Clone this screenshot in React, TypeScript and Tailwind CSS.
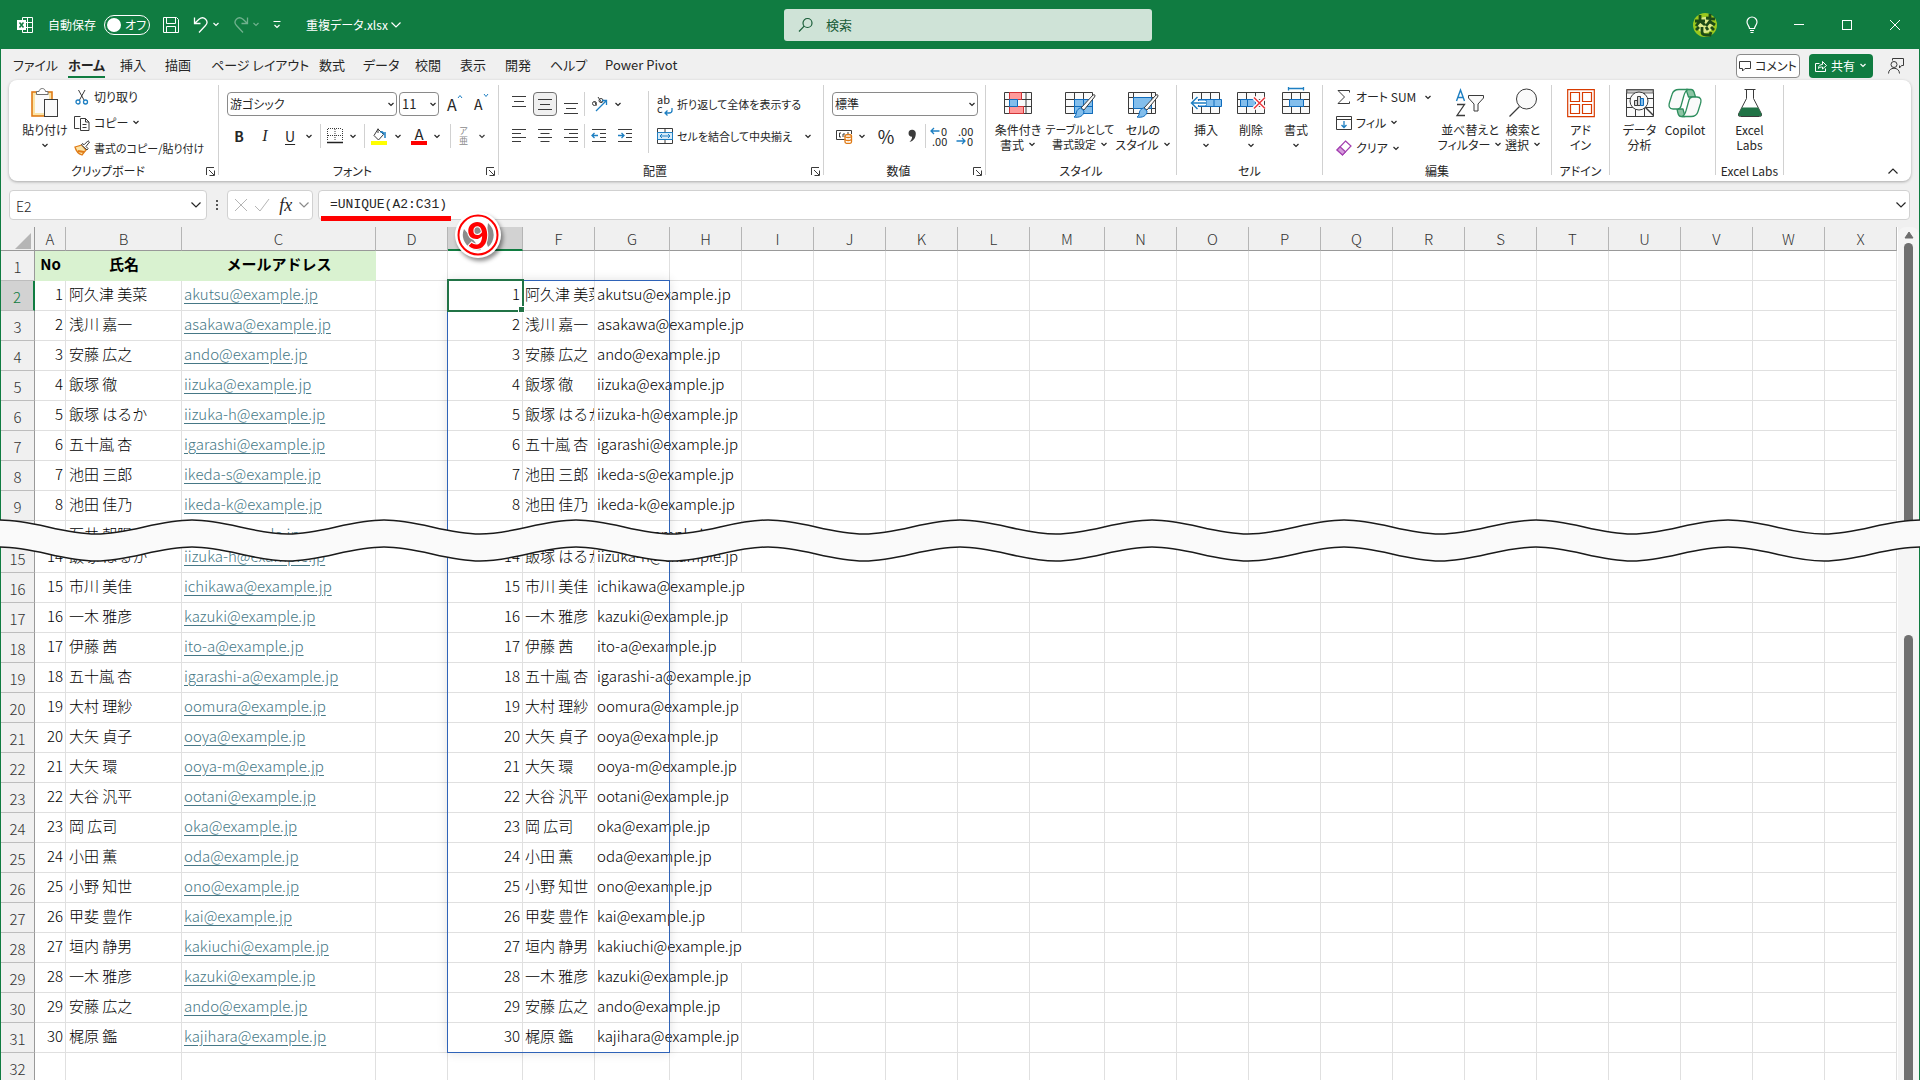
import type { ReactNode } from "react"

type SvgProps = { w?: number; h?: number; children: ReactNode; className?: string }

const Svg = ({ w = 16, h = 16, children, className = "" }: SvgProps) => (
  <svg width={w} height={h} viewBox={`0 0 ${w} ${h}`} fill="none" stroke="#3b3b3b" className={`shrink-0 ${className}`} aria-hidden="true">
    {children}
  </svg>
)

const Chevron = ({ className = "" }: { className?: string }) => (
  <svg width="8" height="5" viewBox="0 0 8 5" fill="none" stroke="currentColor" strokeWidth="1.2" className={`shrink-0 ${className}`} aria-hidden="true">
    <path d="M1.5 1 4 3.5 6.5 1" />
  </svg>
)

const WideChevron = ({ className = "" }: { className?: string }) => (
  <svg width="12" height="8" viewBox="0 0 12 8" fill="none" stroke="currentColor" strokeWidth="1.2" className={`shrink-0 ${className}`} aria-hidden="true">
    <path d="M1.5 1.5 6 6 10.5 1.5" />
  </svg>
)

/* ---------- title bar ---------- */

const TitleBar = () => (
  <header className="grid h-[49px] shrink-0 grid-cols-[1fr_368px_1fr] items-center bg-[#107c41] pl-4 text-white">
    <div className="flex items-center text-xs whitespace-nowrap">
      <Svg w={18} h={18}>
        <g stroke="#fff">
          <path d="M6.500 4.500v-3h10v15h-10v-3M11.500 1.500v15M6.500 6.500h10M6.500 11.500h10" />
        </g>
        <rect x="1" y="4" width="9" height="10" fill="#fff" stroke="none" />
        <path d="m3.500 6.500 4 5M7.500 6.500l-4 5" stroke="#107c41" strokeWidth="1.500" />
      </Svg>
      <span className="ml-3.5">自動保存</span>
      <button role="switch" aria-checked="false" aria-label="自動保存" className="ml-2 flex h-5 w-[46px] items-center gap-1 rounded-full border border-white pl-0.5 [font-feature-settings:'palt']">
        <span className="size-3.5 shrink-0 rounded-full bg-white" />
        オフ
      </button>
      <button aria-label="上書き保存" className="ml-3">
        <Svg w={18} h={18}>
          <path d="M1.500 1.500h13l2 2v13h-15zM4.500 1.500v6h9v-6M4.500 16.500v-6h9v6" stroke="#fff" />
        </Svg>
      </button>
      <button aria-label="元に戻す" className="ml-3 flex items-center gap-0.5">
        <Svg w={18} h={18}>
          <path d="M2.500 1.500v6h6M2.500 7.500 7 3.200c5-4 10.500 2 6.500 6.300l-6.500 7" stroke="#fff" strokeWidth="1.300" />
        </Svg>
        <Chevron />
      </button>
      <button aria-label="やり直し" className="ml-3 flex items-center gap-0.5 opacity-40">
        <Svg w={18} h={18}>
          <path d="M15.500 1.500v6h-6M15.500 7.500 11 3.200c-5-4-10.500 2-6.500 6.300l6.500 7" stroke="#fff" strokeWidth="1.300" />
        </Svg>
        <Chevron />
      </button>
      <button aria-label="クイック アクセス ツール バーのカスタマイズ" className="ml-3">
        <Svg w={10} h={10}>
          <path d="M1.500 1.500h7M2.500 5 5 7.500 7.500 5" stroke="#fff" strokeWidth="1.200" />
        </Svg>
      </button>
      <button className="ml-6 flex items-center gap-0.5 [font-feature-settings:'palt']">
        重複データ.xlsx <WideChevron />
      </button>
    </div>
    <label className="flex h-8 items-center gap-3 rounded-[3px] bg-[#cfe3d7] px-3.5 text-[#185c37]">
      <Svg w={16} h={16}>
        <g stroke="#185c37" strokeWidth="1.200">
          <circle cx="9.500" cy="6" r="4.500" />
          <path d="M6.200 9.200 1 14.500" />
        </g>
      </Svg>
      <input type="search" aria-label="検索" placeholder="検索" className="w-full bg-transparent text-[13px] outline-none placeholder:text-[#185c37]" />
    </label>
    <div className="flex items-center justify-end pr-px">
      <svg width="24" height="24" viewBox="0 0 24 24" className="mr-4" aria-hidden="true">
        <circle cx="12" cy="12" r="12" fill="#9bc81e" />
        <circle cx="12" cy="12" r="8" fill="#dce98a" />
        <g stroke="#1c4a17" strokeWidth="2.800" fill="none">
          <path d="M2 8h10M7 2v6L3 13M7 8l5 4M13 5l9 1M17 1v7l-4 5M16 8l6 4M3 17l3-3M9 14v5q0 3 4 3h4l1-3M13 14l2 3M18 14l3 3" />
        </g>
      </svg>
      <button aria-label="ヒント" className="flex w-[38px] justify-center">
        <Svg w={14} h={18}>
          <path d="M4.500 12.500C4.500 10 2 9 2 6a5 5 0 0 1 10 0c0 3-2.500 4-2.500 6.500zM5 14.500h4M5.500 16.500h3" stroke="#fff" strokeWidth="1.200" />
        </Svg>
      </button>
      <button aria-label="最小化" className="ml-1 flex w-12 justify-center py-4">
        <span className="h-px w-2.5 bg-white" />
      </button>
      <button aria-label="最大化" className="flex w-12 justify-center">
        <span className="size-2.5 border border-white" />
      </button>
      <button aria-label="閉じる" className="flex w-12 justify-center">
        <Svg w={12} h={12}>
          <path d="m1 1 10 10M11 1 1 11" stroke="#fff" />
        </Svg>
      </button>
    </div>
  </header>
)

/* ---------- tabs ---------- */

const tabs = [
  { name: "ファイル", width: "w-[55px]" },
  { name: "ホーム", width: "w-[52px]" },
  { name: "挿入", width: "w-[45px]" },
  { name: "描画", width: "w-[46px]" },
  { name: "ページ レイアウト", width: "w-[108px]" },
  { name: "数式", width: "w-11" },
  { name: "データ", width: "w-[52px]" },
  { name: "校閲", width: "w-[45px]" },
  { name: "表示", width: "w-[45px]" },
  { name: "開発", width: "w-[45px]" },
  { name: "ヘルプ", width: "w-[55px]" },
  { name: "Power Pivot", width: "w-24" },
]

const TabRow = () => (
  <nav className="flex h-[31px] shrink-0 items-center justify-between pt-0.5 pr-3.5 pl-3">
    <div className="flex text-[13px] whitespace-nowrap">
      {tabs.map(tab => (
        <div key={tab.name} className={tab.width}>
          <button className={tab.name === "ホーム" ? "border-b-2 border-[#107c41] leading-[22px] font-bold" : "border-b-2 border-transparent leading-[22px]"}>
            {tab.name}
          </button>
        </div>
      ))}
    </div>
    <div className="flex items-center text-xs whitespace-nowrap">
      <button className="flex h-6 w-16 items-center justify-center gap-1 rounded border border-[#8a8a8a] bg-white">
        <Svg w={12} h={12}>
          <path d="M.5 1.500h11v7H6L3.500 11V8.500h-3z" />
        </Svg>
        コメント
      </button>
      <button className="ml-[9px] flex h-6 w-16 items-center justify-center gap-1 rounded bg-[#107c41] text-white">
        <Svg w={12} h={12}>
          <path d="M4.500 3.500h-4v8h10v-3M3.500 8.500c0-3 2-4 4-4v-3l4 4-4 3.500v-2c-2 0-3 .3-4 1.500z" stroke="#fff" />
        </Svg>
        共有 <Chevron />
      </button>
      <button aria-label="フィードバック" className="ml-3.5">
        <Svg w={18} h={18}>
          <path d="M5.500 3.500v-2h11v7h-2l-2 2.500v-2.500" />
          <circle cx="7" cy="7.500" r="3" />
          <path d="M1.500 16.500c0-7 11-7 11 0" />
        </Svg>
      </button>
    </div>
  </nav>
)

/* ---------- ribbon ---------- */

const Launcher = () => (
  <button aria-label="詳細設定" className="mr-[3px]">
    <Svg w={9} h={9}>
      <path d="M.5 8V.5H8M3 3l5 5M8.500 3.500v5h-5" />
    </Svg>
  </button>
)

type GroupProps = { label: string; width: string; launcher?: boolean; children: ReactNode }

const Group = ({ label, width, launcher, children }: GroupProps) => (
  <section className={`flex h-[90px] shrink-0 flex-col border-r border-[#d1d1d1] ${width}`}>
    <div className="flex h-[78px] min-w-0 shrink-0">{children}</div>
    <div className="flex h-4 shrink-0 items-center">
      <span className="flex-1 text-center leading-4 whitespace-nowrap">{label}</span>
      {launcher && <Launcher />}
    </div>
  </section>
)

type BigProps = { icon: ReactNode; lines: string[]; width: string; menu?: "inline" | "below" }

const BigButton = ({ icon, lines, width, menu }: BigProps) => (
  <button className={`flex shrink-0 flex-col items-center pt-0.5 leading-[15px] whitespace-nowrap ${width}`}>
    <span className="mb-[3px] flex h-8 items-start">{icon}</span>
    {lines.map((line, i) => (
      <span key={line} className="flex items-center gap-1">
        {line}
        {menu === "inline" && i === lines.length - 1 && <Chevron />}
      </span>
    ))}
    {menu === "below" && <Chevron className="mt-1.5" />}
  </button>
)

const Divider = ({ className = "h-6" }: { className?: string }) => <span className={`w-px shrink-0 bg-[#d1d1d1] ${className}`} />

const PasteIcon = () => (
  <Svg w={28} h={32}>
    <rect x="1" y="5" width="20" height="24" fill="#fbe3a6" stroke="#e07b16" strokeWidth="1.600" />
    <rect x="4" y="8" width="14" height="18" fill="#fafafa" stroke="none" />
    <path d="M5.500 7.500v-3h2.500c.5-4 6-4 6.500 0h2.500v3z" fill="#fff" stroke="#707070" />
    <rect x="13.500" y="12.500" width="13" height="17" fill="#fafafa" stroke="#3b3b3b" />
  </Svg>
)

const ClipboardGroup = () => (
  <Group label="クリップボード" width="w-[209px]" launcher>
    <BigButton icon={<PasteIcon />} lines={["貼り付け"]} width="w-16 pl-1.5" menu="below" />
    <div className="flex flex-col">
      <button className="flex h-6 items-center gap-1">
        <Svg>
          <path d="M4.500 1 10 11M11 1 5.500 11" />
          <circle cx="4" cy="13" r="2" stroke="#1e7fc2" strokeWidth="1.300" />
          <circle cx="11.500" cy="13" r="2" stroke="#1e7fc2" strokeWidth="1.300" />
        </Svg>
        切り取り
      </button>
      <button className="flex h-[27px] items-center gap-1">
        <Svg>
          <path d="M5.500 13.500h-5V1.500h6" />
          <path d="M6.500 3.500h5l3.500 3.500v8.500H6.500zM11.500 3.500V7H15M8.500 9.500h4M8.500 12.500h4" />
        </Svg>
        コピー <Chevron />
      </button>
      <button className="flex h-6 items-center gap-1 text-[11px]">
        <Svg>
          <path d="m1 7 7-2 4 5-4 5C5 14 2 11 1 7z" fill="#fbe3a6" stroke="#e07b16" strokeWidth="1.300" />
          <path d="M4 11l6 1" stroke="#e07b16" strokeWidth="2" />
          <path d="m7.500 5 5.500 5 1-1.500-2-2L15.500 2 14 .8l-4 4L8.500 3.500z" fill="#fff" />
        </Svg>
        書式のコピー/貼り付け
      </button>
    </div>
  </Group>
)

const FontGroup = () => (
  <Group label="フォント" width="w-[280px]" launcher>
    <div className="flex flex-col gap-2 pt-[7px] pl-2">
      <div className="flex items-center gap-0.5">
        <span className="relative">
          <select aria-label="フォント" className="h-6 w-[170px] appearance-none rounded border border-[#8a8a8a] bg-white pl-0.5">
            <option>游ゴシック</option>
          </select>
          <Chevron className="pointer-events-none absolute top-2.5 right-0.5" />
        </span>
        <span className="relative">
          <select aria-label="フォント サイズ" className="h-6 w-10 appearance-none rounded border border-[#8a8a8a] bg-white pl-0.5 text-[13px]">
            <option>11</option>
          </select>
          <Chevron className="pointer-events-none absolute top-2.5 right-0.5" />
        </span>
        <button aria-label="フォント サイズの拡大" className="ml-1.5 flex w-[25px] items-start">
          <span className="text-base leading-5">A</span>
          <Svg w={6} h={5}>
            <path d="M1 4 3 1.500 5 4" stroke="#1e7fc2" />
          </Svg>
        </button>
        <button aria-label="フォント サイズの縮小" className="flex items-start">
          <span className="text-sm leading-[22px]">A</span>
          <Svg w={6} h={5}>
            <path d="M1 1 3 3.500 5 1" stroke="#1e7fc2" />
          </Svg>
        </button>
      </div>
      <div className="flex h-6 items-center">
        <button aria-label="太字" className="w-6 text-sm font-bold">B</button>
        <button aria-label="斜体" className="w-7 font-['Liberation_Serif',serif] text-base italic">I</button>
        <button aria-label="下線" className="flex w-[41px] items-center gap-2.5 pl-1.5 text-sm">
          <span className="underline underline-offset-2">U</span>
          <Chevron />
        </button>
        <Divider />
        <button aria-label="罫線" className="flex w-[43px] items-center gap-1.5 pl-1.5">
          <Svg>
            <path d="M.5 1v12M15.500 1v12M8 1v12M1 .5h14M1 7.500h14" strokeDasharray="1 1" />
            <path d="M0 14.500h16" stroke="#222" strokeWidth="1.500" />
          </Svg>
          <Chevron />
        </button>
        <Divider />
        <button aria-label="塗りつぶしの色" className="flex w-10 items-center gap-1.5 pl-1.5">
          <Svg w={17} h={18}>
            <path d="m7 2 5.500 5.500L7.500 13 3 8.500zM7 6V1.500" />
            <path d="M12.500 7.500c0-3-2-3-3-2M14 5v6" stroke="#1e7fc2" strokeWidth="1.500" />
            <path d="M0 16h16" stroke="#ffff00" strokeWidth="4" />
          </Svg>
          <Chevron />
        </button>
        <button aria-label="フォントの色" className="flex w-[45px] items-center gap-1.5 pl-1.5">
          <span className="w-4 border-b-4 border-[#ff0000] text-center text-[15px] leading-[14px]">A</span>
          <Chevron />
        </button>
        <Divider />
        <button aria-label="ふりがな" className="flex items-center gap-2.5 pl-2 text-[#8a8a8a]">
          <span className="flex flex-col text-[9px] leading-[10px]">
            <span>ア</span>
            <span>亜</span>
          </span>
          <Chevron className="text-[#3b3b3b]" />
        </button>
      </div>
    </div>
  </Group>
)

const alignRows = {
  top: "M1 1.500h14M3 6.500h10M1 11.500h14",
  left: "M1 1.500h14M1 5.500h9M1 9.500h14M1 13.500h9",
  center: "M1 1.500h14M3.500 5.500h9M1 9.500h14M3.500 13.500h9",
  right: "M1 1.500h14M6 5.500h9M1 9.500h14M6 13.500h9",
}

const AlignmentGroup = () => (
  <Group label="配置" width="w-[325px]" launcher>
    <div className="flex flex-col gap-2 pt-[7px] pl-[7px]">
      <div className="flex h-6 items-center">
        <button aria-label="上揃え" className="flex w-[26px] justify-center pb-1.5">
          <Svg h={13}><path d={alignRows.top} /></Svg>
        </button>
        <button aria-label="上下中央揃え" aria-pressed="true" className="mx-px flex h-6 w-6 items-center justify-center rounded border border-[#707070] bg-[#f0f0f0]">
          <Svg h={13}><path d={alignRows.top} /></Svg>
        </button>
        <button aria-label="下揃え" className="flex w-[26px] justify-center pt-2">
          <Svg h={13}><path d={alignRows.top} /></Svg>
        </button>
        <Divider />
        <button aria-label="方向" className="flex items-center gap-1.5 pl-1.5">
          <Svg w={17} h={16}>
            <circle cx="3.500" cy="7.500" r="2" />
            <path d="m5.500 9.500-2-4M7 1l4 6" />
            <circle cx="10" cy="4.500" r="2" />
            <path d="M5 15 15 5M11 4.500h4.500V9" stroke="#1e7fc2" strokeWidth="1.300" />
          </Svg>
          <Chevron />
        </button>
      </div>
      <div className="flex h-6 items-center">
        <button aria-label="左揃え" className="flex w-[26px] justify-center"><Svg><path d={alignRows.left} /></Svg></button>
        <button aria-label="中央揃え" className="flex w-[26px] justify-center"><Svg><path d={alignRows.center} /></Svg></button>
        <button aria-label="右揃え" className="flex w-[26px] justify-center"><Svg><path d={alignRows.right} /></Svg></button>
        <Divider />
        <button aria-label="インデントを減らす" className="flex w-[27px] justify-center">
          <Svg>
            <path d="M1 1.500h14M9 5.500h6M9 9.500h6M1 13.500h14" />
            <path d="M7 7.500H1M3.500 5 1 7.500 3.500 10" stroke="#1e7fc2" strokeWidth="1.300" />
          </Svg>
        </button>
        <button aria-label="インデントを増やす" className="flex w-[26px] justify-center">
          <Svg>
            <path d="M1 1.500h14M9 5.500h6M9 9.500h6M1 13.500h14" />
            <path d="M1 7.500h6M4.500 5 7 7.500 4.500 10" stroke="#1e7fc2" strokeWidth="1.300" />
          </Svg>
        </button>
      </div>
    </div>
    <Divider className="mt-1.5 ml-2.5 h-[62px]" />
    <div className="flex flex-col gap-2 pt-[7px] pl-2 text-[11px]">
      <button className="flex h-6 items-center gap-1 whitespace-nowrap">
        <span className="relative flex w-4 flex-col text-left leading-[9px]">
          <span>ab</span>
          <span>c</span>
          <Svg w={9} h={9} className="absolute right-0 -bottom-1">
            <path d="M8 0v2.500Q8 5 5 5H1M3.500 2.500 1 5l2.500 2.500" stroke="#1e7fc2" strokeWidth="1.300" />
          </Svg>
        </span>
        折り返して全体を表示する
      </button>
      <button className="flex h-6 items-center gap-1 whitespace-nowrap">
        <Svg>
          <path d="M.5 .5h15v15H.5zM8 .5v4M8 11.500v4" />
          <path d="M.5 4.500h15v7H.5z" fill="#d8ebf8" stroke="#1e7fc2" />
          <path d="M3 8h10M5 6 3 8l2 2M11 6l2 2-2 2" stroke="#1e7fc2" />
        </Svg>
        セルを結合して中央揃え <Chevron className="ml-2" />
      </button>
    </div>
  </Group>
)

const NumberGroup = () => (
  <Group label="数値" width="w-[162px]" launcher>
    <div className="flex flex-col gap-2 pt-[7px] pl-2">
      <span className="relative">
        <select aria-label="表示形式" className="h-6 w-[146px] appearance-none rounded border border-[#8a8a8a] bg-white pl-0.5">
          <option>標準</option>
        </select>
        <Chevron className="pointer-events-none absolute top-2.5 right-0.5" />
      </span>
      <div className="flex h-6 items-center">
        <button aria-label="通貨表示形式" className="flex w-10 items-center gap-1 pl-1">
          <Svg w={18} h={16}>
            <path d="M9 11.500H.5v-9h15V6M5 5H3.500v4H5M7 9V6h2M11 5h2" />
            <path d="M9 8v6c0 2 6.500 2 6.500 0V8" fill="#fff" stroke="#e07b16" strokeWidth="1.300" />
            <ellipse cx="12.200" cy="8" rx="3.300" ry="1.500" fill="#fff" stroke="#e07b16" strokeWidth="1.300" />
            <path d="M9 11c0 2 6.500 2 6.500 0" stroke="#e07b16" strokeWidth="1.300" />
          </Svg>
          <Chevron />
        </button>
        <button aria-label="パーセント スタイル" className="w-7 text-lg">%</button>
        <button aria-label="桁区切りスタイル" className="flex w-[25px] justify-center">
          <Svg w={9} h={14}>
            <path d="M4 .8a3.500 3.500 0 0 1 3.800 3.700C7.800 9 5.500 12 1.500 13c2-2 2.600-3.300 2.600-5.200A3.500 3.500 0 0 1 4 .8z" fill="#3b3b3b" stroke="none" />
          </Svg>
        </button>
        <Divider />
        <button aria-label="小数点以下の表示桁数を増やす" className="ml-1 flex w-[26px] flex-col items-start text-[11px] leading-[10px]">
          <span className="flex items-center gap-px">
            <Svg w={10} h={8}><path d="M9.500 4H1M4 1 1 4l3 3" stroke="#1e7fc2" strokeWidth="1.300" /></Svg>0
          </span>
          <span className="pl-0.5">.00</span>
        </button>
        <button aria-label="小数点以下の表示桁数を減らす" className="flex flex-col items-start text-[11px] leading-[10px]">
          <span className="pl-0.5">.00</span>
          <span className="flex items-center gap-px">
            <Svg w={10} h={8}><path d="M.5 4H9M6 1l3 3-3 3" stroke="#1e7fc2" strokeWidth="1.300" /></Svg>0
          </span>
        </button>
      </div>
    </div>
  </Group>
)

const Brush = () => (
  <g>
    <path d="M29 8c2-1 2.500.5 1.500 2L20 23l-3-2z" fill="#fafafa" stroke="#3b3b3b" />
    <path d="M16.500 21 20 24c0 5-5 7-10 6 2-1 2-2.500 2.500-5 .5-2 2-3.500 4-4z" fill="#83beec" stroke="#0f6cbd" />
  </g>
)

const ConditionalIcon = () => (
  <Svg w={28} h={32}>
    <path d="M.5 5.500h27v21H.5zM.5 12.500h27M.5 19.500h27M5.500 5.500v21M22 5.500v21" fill="#fafafa" />
    <path d="M5.500 5.500h12v7h-12zM5.500 19.500h14v7h-14z" fill="#ff9a9a" stroke="#d13438" />
    <path d="M5.500 12.500h8v7h-8z" fill="#83beec" stroke="#0f6cbd" />
  </Svg>
)

const TableIcon = () => (
  <Svg w={32} h={32}>
    <path d="M1.500 5.500h27v21h-27zM1.500 12.500h27M1.500 19.500h27M10.500 5.500v21M19.500 5.500v21" fill="#fafafa" />
    <path d="M10.500 12.500h18v14h-18zM10.500 19.500h18M19.500 12.500v14" fill="#83beec" stroke="#0f6cbd" />
    <Brush />
  </Svg>
)

const CellStyleIcon = () => (
  <Svg w={32} h={32}>
    <path d="M1.500 5.500h27v21h-27zM1.500 10.500h27M1.500 21.500h27M6.500 5.500v21M24.500 5.500v21" fill="#fafafa" />
    <path d="M6.500 10.500h18v11h-18z" fill="#83beec" stroke="#0f6cbd" />
    <Brush />
  </Svg>
)

const StyleGroup = () => (
  <Group label="スタイル" width="w-[191px]">
    <BigButton icon={<ConditionalIcon />} lines={["条件付き", "書式"]} width="ml-[3px] w-[58px]" menu="inline" />
    <BigButton icon={<TableIcon />} lines={["テーブルとして", "書式設定"]} width="w-[66px] text-[11px]" menu="inline" />
    <BigButton icon={<CellStyleIcon />} lines={["セルの", "スタイル"]} width="w-[60px]" menu="inline" />
  </Group>
)

const CellBase = () => (
  <path d="M2.500 5.500h27v21h-27zM2.500 12.500h27M2.500 19.500h27M11.500 5.500v21M20.500 5.500v21" fill="#fafafa" />
)

const CellsGroup = () => (
  <Group label="セル" width="w-[146px]">
    <BigButton
      icon={
        <Svg w={32} h={32}>
          <CellBase />
          <path d="M8.500 12.500h23v7h-23zM16 12.500v7M24 12.500v7" fill="#83beec" stroke="#0f6cbd" />
          <path d="M16 16H2M7.500 10 1.500 16l6 6" stroke="#fff" strokeWidth="4" />
          <path d="M16 16H2M7.500 10 1.500 16l6 6" stroke="#1e7fc2" strokeWidth="1.500" />
        </Svg>
      }
      lines={["挿入"]}
      width="ml-1.5 w-[46px]"
      menu="below"
    />
    <BigButton
      icon={
        <Svg w={32} h={32}>
          <CellBase />
          <path d="M5.500 12.500h15v7h-15zM12.500 12.500v7" fill="#83beec" stroke="#0f6cbd" />
          <path d="m19 10.500 11 11M30 10.500l-11 11" stroke="#fff" strokeWidth="4" />
          <path d="m19 10.500 11 11M30 10.500l-11 11" stroke="#e8383d" strokeWidth="1.500" />
        </Svg>
      }
      lines={["削除"]}
      width="w-11"
      menu="below"
    />
    <BigButton
      icon={
        <Svg w={32} h={32}>
          <CellBase />
          <path d="M9.500 12.500h14v7h-14z" fill="#83beec" stroke="#0f6cbd" />
          <path d="M8.500 1.500h15M8.500 0v3.500M23.500 0v3.500" stroke="#1e7fc2" strokeWidth="1.300" />
        </Svg>
      }
      lines={["書式"]}
      width="w-[46px]"
      menu="below"
    />
  </Group>
)

const EditGroup = () => (
  <Group label="編集" width="w-[229px]">
    <div className="flex w-[119px] flex-col pl-3">
      <button className="flex h-6 items-center gap-1 pl-px">
        <Svg><path d="M13.500 3.500v-2H2L8.500 8 2 14.500h11.500v-2" /></Svg>
        オート SUM <Chevron className="ml-1" />
      </button>
      <button className="flex h-[27px] items-center gap-1 pl-px">
        <Svg>
          <path d="M.5 1.500h15v13H.5zM.5 4.500h15" />
          <path d="M8 6v6.500M5.500 10 8 12.500l2.500-2.500" stroke="#1e7fc2" strokeWidth="1.300" />
        </Svg>
        フィル <Chevron />
      </button>
      <button className="flex h-6 items-center gap-1 pl-px">
        <Svg>
          <path d="m9.500 1 5.500 5-8.500 9L1 10z" fill="#fff" stroke="#a33fb0" strokeWidth="1.200" />
          <path d="m4 6.800 5.500 5L6.500 15 1 10z" fill="#d59bdc" stroke="#a33fb0" strokeWidth="1.200" />
        </Svg>
        クリア <Chevron />
      </button>
    </div>
    <BigButton
      icon={
        <Svg w={30} h={32}>
          <path d="M1.500 14 5.500 3l4 11M3 10.500h5" stroke="#1e7fc2" strokeWidth="1.400" />
          <path d="M2 17.500h7.500L2 28.500h8" strokeWidth="1.300" />
          <path d="M13.500 8.500h15v2.500l-5.500 6v7h-4v-7l-5.500-6z" fill="#fafafa" />
        </Svg>
      }
      lines={["並べ替えと", "フィルター"]}
      width="w-[56px]"
      menu="inline"
    />
    <BigButton
      icon={
        <Svg w={30} h={32}>
          <circle cx="18.500" cy="12" r="10" fill="#fafafa" />
          <path d="M11.500 19.500 1.500 29.500" strokeWidth="1.300" />
        </Svg>
      }
      lines={["検索と", "選択"]}
      width="w-[50px]"
      menu="inline"
    />
  </Group>
)

const AddinGroups = () => (
  <>
    <Group label="アドイン" width="w-[58px]">
      <BigButton
        icon={
          <Svg w={28} h={32}>
            <path d="M.7 2.700h26.600v27H.7zM3.500 5.500h9v9h-9zM15.500 5.500h9v9h-9zM3.500 17.500h9v9h-9zM15.500 17.500h9v9h-9z" stroke="#d83b01" strokeWidth="1.200" />
          </Svg>
        }
        lines={["アド", "イン"]}
        width="w-[57px]"
      />
    </Group>
    <Group label="" width="w-[106px]">
      <BigButton
        icon={
          <Svg w={28} h={32}>
            <path d="M.5 2.500h27v27H.5zM.5 11.500h27M.5 20.500h27M9.500 6v23M18.500 6v23" fill="#fafafa" />
            <path d="M1 3h26v3H1z" fill="#c8c8c8" stroke="#707070" />
            <circle cx="13" cy="14" r="9" fill="#fafafa" />
            <path d="M8.500 13.500h3v5h-3zM11.500 9.500h3v9h-3z" fill="#d1d1d1" />
            <path d="M14.500 11.500h3v7h-3z" fill="#83beec" stroke="#0f6cbd" />
            <path d="m19.500 20.500 8 8" strokeWidth="1.400" />
          </Svg>
        }
        lines={["データ", "分析"]}
        width="ml-1 w-[51px]"
      />
      <BigButton
        icon={
          <Svg w={34} h={32}>
            <g stroke="#2f8f5f" strokeWidth="1.300" strokeLinejoin="round">
              <path d="M18 2.500h5c2.500 0 3 2 3.500 4l1 3.500h-7z" fill="#8cc5a4" />
              <path d="M9 22h6l2 7.500h-4c-2.500 0-3-2.500-4-7.500z" fill="#8cc5a4" />
              <path d="M11 2.500h9c-3 1-3.500 4-4.500 7.500l-2.500 9c-.6 2.300-1.500 3-3.500 3H5c-4 0-4.500-3-3.500-6.500l2.500-8c1-3.500 3-5 7-5z" fill="#fafafa" />
              <path d="M23 29.500h-9c3-1 3.500-4 4.500-7.500l2.500-9c.6-2.300 1.500-3 3.500-3H29c4 0 4.500 3 3.500 6.500l-2.500 8c-1 3.500-3 5-7 5z" fill="#fafafa" />
            </g>
          </Svg>
        }
        lines={["Copilot"]}
        width="w-10"
      />
    </Group>
    <Group label="Excel Labs" width="w-[68px]">
      <BigButton
        icon={
          <Svg w={26} h={32}>
            <path d="M9.500 2.500v9L1.500 27q-.8 2.500 2 2.500h19q2.800 0 2-2.500l-8-15.500v-9M7.500 2.500h11" fill="#fff" />
            <path d="M5 20.500h16l3.500 6.500q.5 2-2 2h-19q-2.500 0-2-2z" fill="#217346" stroke="none" />
          </Svg>
        }
        lines={["Excel", "Labs"]}
        width="w-[67px]"
      />
    </Group>
  </>
)

const Ribbon = () => (
  <div className="mx-[9px] flex h-[101px] shrink-0 items-start overflow-hidden rounded-lg bg-white pt-[5px] pl-px text-xs shadow-[0_1px_3px_rgba(0,0,0,0.3)]">
    <ClipboardGroup />
    <FontGroup />
    <AlignmentGroup />
    <NumberGroup />
    <StyleGroup />
    <CellsGroup />
    <EditGroup />
    <AddinGroups />
    <button aria-label="リボンを折りたたむ" className="mr-3 mb-1.5 ml-auto self-end">
      <WideChevron className="rotate-180" />
    </button>
  </div>
)

/* ---------- formula bar ---------- */

const FormulaBar = () => (
  <div className="mt-[9px] mr-[9px] ml-2 flex h-[30px] shrink-0 items-stretch">
    <label className="flex w-[198px] items-center rounded border border-[#d1d1d1] bg-white pr-1 pl-1.5">
      <input aria-label="名前ボックス" defaultValue="E2" className="w-full pt-0.5 text-sm font-light outline-none" />
      <WideChevron />
    </label>
    <div className="flex w-5 flex-col items-center justify-center gap-0.5">
      <span className="size-0.5 bg-[#555]" />
      <span className="size-0.5 bg-[#555]" />
      <span className="size-0.5 bg-[#555]" />
    </div>
    <div className="flex w-[86px] items-center justify-between rounded border border-[#d1d1d1] bg-white px-1.5">
      <button aria-label="キャンセル"><Svg w={14} h={14}><path d="m1 1 12 12M13 1 1 13" stroke="#b5b5b5" /></Svg></button>
      <button aria-label="入力"><Svg w={16} h={14}><path d="m1 8 5 5L15 1" stroke="#b5b5b5" /></Svg></button>
      <button aria-label="関数の挿入" className="pl-1 font-['Liberation_Serif',serif] text-lg leading-5 italic">
        fx
      </button>
      <WideChevron className="-mr-1 text-[#8a8a8a]" />
    </div>
    <div className="relative ml-[5px] flex min-w-0 flex-1 items-center rounded border border-[#d1d1d1] bg-white pr-0.5 pl-[11px]">
      <input aria-label="数式バー" defaultValue="=UNIQUE(A2:C31)" className="w-full font-['Liberation_Mono',monospace] text-[13px] outline-none" />
      <WideChevron />
      <span className="absolute top-[25px] left-0.5 h-[5px] w-[130px] bg-[#ff0000]" />
      <svg width="60" height="60" viewBox="0 0 60 60" className="absolute top-3.5 left-[129px] z-20 drop-shadow-[2px_3px_2px_rgba(0,0,0,0.45)]">
        <circle cx="30" cy="30" r="23" fill="#fff" />
        <circle cx="30" cy="30" r="19.500" fill="#fff" stroke="#ff0000" strokeWidth="2" />
        <path d="M16 24a15.500 15.500 0 0 0 17 21l-6-8zM40 18a15.500 15.500 0 0 1 0 24l-2-6z" fill="#8c8c8c" />
        <circle cx="30" cy="25" r="6" fill="#8c8c8c" />
        <text x="30" y="44" textAnchor="middle" fontSize="38" fontWeight="700" fill="#ff0000" stroke="#fff" strokeWidth="2" paintOrder="stroke" className="font-['Noto_Sans_CJK_JP',sans-serif]">9</text>
      </svg>
    </div>
  </div>
)

/* ---------- sheet ---------- */

const columns = [
  { name: "A", width: 31 }, { name: "B", width: 116 }, { name: "C", width: 194 }, { name: "D", width: 72 },
  { name: "E", width: 75 }, { name: "F", width: 72 }, { name: "G", width: 75 }, { name: "H", width: 72 },
  { name: "I", width: 72 }, { name: "J", width: 72 }, { name: "K", width: 72 }, { name: "L", width: 72 },
  { name: "M", width: 75 }, { name: "N", width: 72 }, { name: "O", width: 72 }, { name: "P", width: 72 },
  { name: "Q", width: 72 }, { name: "R", width: 72 }, { name: "S", width: 72 }, { name: "T", width: 72 },
  { name: "U", width: 72 }, { name: "V", width: 72 }, { name: "W", width: 72 }, { name: "X", width: 72 },
]

type Person = { no: number; name: string; mail: string }

const people: Person[] = [
  { no: 1, name: "阿久津 美菜", mail: "akutsu@example.jp" },
  { no: 2, name: "浅川 嘉一", mail: "asakawa@example.jp" },
  { no: 3, name: "安藤 広之", mail: "ando@example.jp" },
  { no: 4, name: "飯塚 徹", mail: "iizuka@example.jp" },
  { no: 5, name: "飯塚 はるか", mail: "iizuka-h@example.jp" },
  { no: 6, name: "五十嵐 杏", mail: "igarashi@example.jp" },
  { no: 7, name: "池田 三郎", mail: "ikeda-s@example.jp" },
  { no: 8, name: "池田 佳乃", mail: "ikeda-k@example.jp" },
  { no: 9, name: "石井 朝陽", mail: "ishii@example.jp" },
  { no: 14, name: "飯塚 はるか", mail: "iizuka-h@example.jp" },
  { no: 15, name: "市川 美佳", mail: "ichikawa@example.jp" },
  { no: 16, name: "一木 雅彦", mail: "kazuki@example.jp" },
  { no: 17, name: "伊藤 茜", mail: "ito-a@example.jp" },
  { no: 18, name: "五十嵐 杏", mail: "igarashi-a@example.jp" },
  { no: 19, name: "大村 理紗", mail: "oomura@example.jp" },
  { no: 20, name: "大矢 貞子", mail: "ooya@example.jp" },
  { no: 21, name: "大矢 環", mail: "ooya-m@example.jp" },
  { no: 22, name: "大谷 汎平", mail: "ootani@example.jp" },
  { no: 23, name: "岡 広司", mail: "oka@example.jp" },
  { no: 24, name: "小田 薫", mail: "oda@example.jp" },
  { no: 25, name: "小野 知世", mail: "ono@example.jp" },
  { no: 26, name: "甲斐 豊作", mail: "kai@example.jp" },
  { no: 27, name: "垣内 静男", mail: "kakiuchi@example.jp" },
  { no: 28, name: "一木 雅彦", mail: "kazuki@example.jp" },
  { no: 29, name: "安藤 広之", mail: "ando@example.jp" },
  { no: 30, name: "梶原 鑑", mail: "kajihara@example.jp" },
]

// rows whose spilled address runs past column H
const longRows = [2, 15, 18, 27]

// the last row above the break is cut short
const cutRow = 9

const cell = "border-r border-b border-[#e0e0e0] p-0 align-top"

const RowHeader = ({ row, active }: { row: number; active?: boolean }) => (
  <th
    scope="row"
    className={
      active
        ? "border-r-2 border-b border-[#107c41] border-b-[#bdbdbd] bg-[#d2d2d2] p-0 align-top font-light text-[#107c41]"
        : "border-r border-b border-[#999] border-b-[#bdbdbd] bg-[#f0f0f0] p-0 align-top font-light text-[#333]"
    }
  >
    <div className={row === cutRow + 1 ? "h-[21px] overflow-hidden" : "h-[29px] pt-[3px]"}>{row}</div>
  </th>
)

const BlankCells = ({ from }: { from: number }) => (
  <>
    {columns.slice(from).map(col => <td key={col.name} className={cell} />)}
  </>
)

const PersonRow = ({ person }: { person: Person }) => {
  const { no, name, mail } = person
  const clip = no === cutRow ? "h-[21px]" : "h-[29px]"
  return (
    <tr className={no === cutRow ? "h-[22px]" : "h-[30px]"}>
      <RowHeader row={no + 1} active={no === 1} />
      <td className={`${cell} text-right`}>
        <div className={`${clip} pr-0.5`}>{no}</div>
      </td>
      <td className={cell}>
        <div className={`${clip} overflow-hidden pl-[3px]`}>{name}</div>
      </td>
      <td className={cell}>
        <div className={`${clip} pl-0.5`}>
          <a href={`mailto:${mail}`} className="text-[#467886] underline underline-offset-[3px]">{mail}</a>
        </div>
      </td>
      <td className={cell} />
      <td className={`${cell} relative text-right`}>
        <div className={`${clip} pr-0.5`}>{no}</div>
        {no === 1 && (
          <>
            <span className="pointer-events-none absolute -top-px -left-px z-10 h-[773px] w-[223px] border border-[#2f63b8] shadow-[0_0_10px_rgba(0,0,0,0.12)]" />
            <span className="pointer-events-none absolute -top-0.5 -left-px z-10 h-[33px] w-[77px] border-2 border-[#217346]" />
            <span className="absolute -right-[3px] -bottom-[3px] z-10 size-[7px] border border-white bg-[#217346]" />
          </>
        )}
      </td>
      <td className={cell}>
        <div className={`${clip} overflow-hidden pl-0.5`}>{name}</div>
      </td>
      <td className={cell}>
        <div className={`${clip} w-0 pl-0.5`}>{mail}</div>
      </td>
      <td className={longRows.includes(no) ? `${cell} border-r-transparent` : cell} />
      <BlankCells from={8} />
    </tr>
  )
}

const halfPeriods = Array.from({ length: 20 }, (_, i) => i)

const waveForward = (y: number) =>
  `M0 ${y}` + halfPeriods.map(i => {
    const x = i * 96
    const [a, b] = i % 2 === 0 ? [y, y + 14] : [y + 14, y]
    return `C${x + 35} ${a} ${x + 61} ${b} ${x + 96} ${b}`
  }).join("")

const waveBand = () =>
  waveForward(1) + "V28" + halfPeriods.map(i => {
    const x = 1920 - i * 96
    const [a, b] = i % 2 === 0 ? [28, 42] : [42, 28]
    return `C${x - 35} ${a} ${x - 61} ${b} ${x - 96} ${b}`
  }).join("") + "Z"

// torn strip that hides the skipped rows
const BreakBand = () => (
  <svg viewBox="0 0 1920 43" preserveAspectRatio="none" className="absolute top-[292px] -left-px z-20 h-[43px] w-[calc(100%+2px)]" fill="none" aria-hidden="true">
    <path d={waveBand()} fill="#fafafa" />
    <path d={waveForward(1)} stroke="#1a1a1a" strokeWidth="1.500" />
    <path d={waveForward(28)} stroke="#1a1a1a" strokeWidth="1.500" />
  </svg>
)

const Scrollbar = () => (
  <div className="flex w-[21px] shrink-0 flex-col items-center rounded-t-lg bg-[#f5f5f5] pt-1">
    <button aria-label="上へスクロール">
      <Svg w={10} h={8}><path d="M5 1 9 7H1z" fill="#6e6e6e" stroke="#6e6e6e" /></Svg>
    </button>
    <div className="mt-1 h-[290px] w-[9px] rounded-t-full bg-[#707070]" />
    <div className="mt-[102px] w-[9px] flex-1 rounded-t-full bg-[#707070]" />
  </div>
)

const Sheet = () => (
  <main className="relative mt-[7px] flex min-h-0 flex-1">
    <div className="min-w-0 flex-1 overflow-hidden bg-white">
      <table className="w-0 table-fixed border-separate border-spacing-0 text-[15px] leading-[26px] font-light whitespace-nowrap text-black">
        <colgroup>
          <col style={{ width: 34 }} />
          {columns.map(col => <col key={col.name} style={{ width: col.width }} />)}
        </colgroup>
        <thead>
          <tr className="h-6 bg-[#f0f0f0] leading-[22px]">
            <th aria-label="すべて選択" className="border-r border-b border-[#999] p-0">
              <svg width="17" height="16" viewBox="0 0 17 16" className="mt-1 ml-3.5" aria-hidden="true"><path d="M16 0v16H0z" fill="#b5b5b5" /></svg>
            </th>
            {columns.map(col => (
              <th
                key={col.name}
                scope="col"
                className={
                  col.name === "E"
                    ? "border-r border-b-2 border-r-[#b5b5b5] border-b-[#107c41] bg-[#d2d2d2] p-0 font-light text-[#107c41]"
                    : "border-r border-b border-r-[#b5b5b5] border-b-[#999] p-0 font-light text-[#333]"
                }
              >
                {col.name}
              </th>
            ))}
          </tr>
        </thead>
        <tbody>
          <tr className="h-[30px]">
            <RowHeader row={1} />
            <td className="bg-[#d9f2d0] p-0 text-center align-top font-bold">No</td>
            <td className="bg-[#d9f2d0] p-0 text-center align-top font-bold">氏名</td>
            <td className="bg-[#d9f2d0] p-0 text-center align-top font-bold">メールアドレス</td>
            <BlankCells from={3} />
          </tr>
          {people.map(person => <PersonRow key={person.no} person={person} />)}
          <tr className="h-[30px]">
            <RowHeader row={32} />
            <BlankCells from={0} />
          </tr>
        </tbody>
      </table>
    </div>
    <Scrollbar />
    <BreakBand />
  </main>
)

const App = () => (
  <div className="flex h-screen flex-col overflow-hidden bg-[#f0f0f0] font-['Noto_Sans_CJK_JP','Noto_Sans',sans-serif] text-[#262626]">
    <TitleBar />
    <div className="flex min-h-0 flex-1 flex-col border-x border-[#107c41]">
      <div className="flex shrink-0 flex-col [font-feature-settings:'palt']">
        <TabRow />
        <div className="-mx-px flex flex-col">
          <Ribbon />
        </div>
      </div>
      <FormulaBar />
      <Sheet />
    </div>
  </div>
)

export default App
